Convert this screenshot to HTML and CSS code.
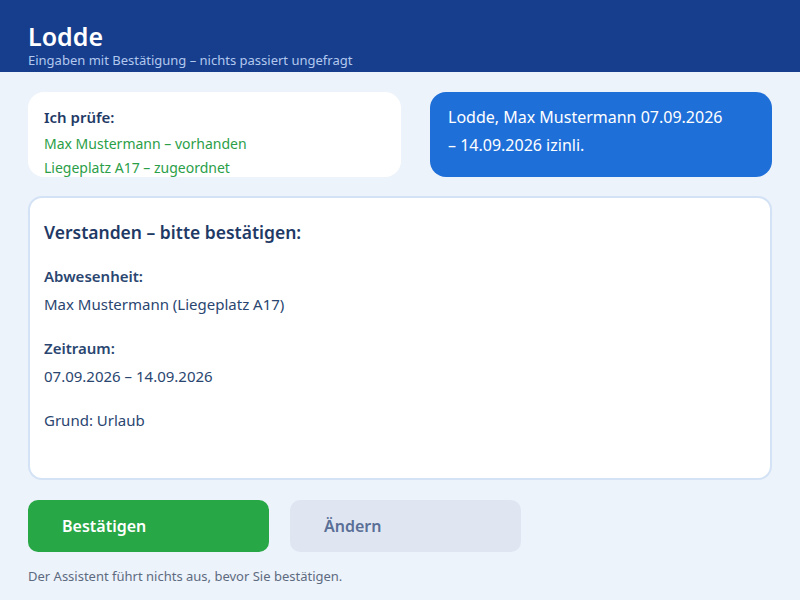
FILE: index.html
```html
<!DOCTYPE html>
<html lang="de">
<head>
    <meta http-equiv="Content-Type" content="text/html; charset=utf-8" />
    <title>Lodde</title>
    <link rel="stylesheet" href="styles.css">
</head>
<body>
  <div class="header">
    <div class="title">Lodde</div>
    <div class="subtitle">Eingaben mit Bestätigung – nichts passiert ungefragt</div>
  </div>

  <div class="main">
    <div class="top-row">
      <div class="check-card">
        <div class="check-title">Ich prüfe:</div>
        <div class="check-item">Max Mustermann – vorhanden</div>
        <div class="check-item">Liegeplatz A17 – zugeordnet</div>
      </div>
      <div class="bubble">Lodde, Max Mustermann 07.09.2026 – 14.09.2026 izinli.</div>
    </div>

    <div class="confirm-card">
      <div class="confirm-title">Verstanden – bitte bestätigen:</div>
      <div class="field">
        <div class="label">Abwesenheit:</div>
        <div class="value">Max Mustermann (Liegeplatz A17)</div>
      </div>
      <div class="field">
        <div class="label">Zeitraum:</div>
        <div class="value">07.09.2026 – 14.09.2026</div>
      </div>
      <div class="field">
        <div class="value">Grund: Urlaub</div>
      </div>
    </div>

    <div class="buttons">
      <button class="btn btn-ok">Bestätigen</button>
      <button class="btn btn-edit">Ändern</button>
    </div>

    <div class="note">Der Assistent führt nichts aus, bevor Sie bestätigen.</div>
  </div>
</body>
</html>
```

FILE: styles.css
```css
body {
    margin: 0;
    background-color: #edf3fb;
    font-family: "Noto Sans", "Open Sans", sans-serif;
    color: #1f3a66;
}

.header {
    background-color: #163e8d;
    padding: 21px 28px 0;
    height: 51px;
}

.title {
    font-size: 25px;
    font-weight: 600;
    color: #ffffff;
    line-height: 30px;
}

.subtitle {
    font-size: 13px;
    color: #b3c8ee;
    line-height: 18px;
}

.main {
    padding: 20px 28px 0;
}

.top-row {
    display: grid;
    grid-template-columns: 373px 1fr;
    gap: 29px;
}

.check-card {
    background-color: #ffffff;
    border-radius: 16px;
    height: 85px;
    overflow: hidden;
    padding: 14px 16px 0;
    box-sizing: border-box;
}

.check-title {
    font-size: 15px;
    font-weight: 600;
    line-height: 22px;
    margin-bottom: 4px;
}

.check-item {
    font-size: 14px;
    color: #2b9e48;
    line-height: 24px;
}

.bubble {
    background-color: #1f6fd9;
    color: #ffffff;
    border-radius: 16px;
    height: 85px;
    box-sizing: border-box;
    padding: 11px 40px 0 18px;
    font-size: 16px;
    line-height: 28px;
}

.confirm-card {
    margin-top: 19px;
    background-color: #ffffff;
    border: 2px solid #d3e2f5;
    border-radius: 14px;
    height: 284px;
    box-sizing: border-box;
    padding: 20px 14px 0;
}

.confirm-title {
    font-size: 17.5px;
    font-weight: 600;
    line-height: 28px;
    margin-bottom: 16px;
}

.field {
    margin-bottom: 16px;
}

.label {
    font-size: 15px;
    font-weight: 600;
    line-height: 28px;
    color: #2a4670;
}

.value {
    font-size: 15px;
    line-height: 28px;
    color: #2a4670;
}

.buttons {
    display: flex;
    gap: 21px;
    margin-top: 20px;
}

.btn {
    height: 52px;
    border: none;
    border-radius: 10px;
    font-family: inherit;
    font-size: 16px;
    font-weight: 600;
    text-align: left;
    padding: 0 34px;
    cursor: pointer;
}

.btn-ok {
    width: 241px;
    background-color: #28a746;
    color: #ffffff;
}

.btn-edit {
    width: 231px;
    background-color: #dfe6f2;
    color: #5a6f96;
}

.note {
    margin-top: 15px;
    font-size: 13px;
    color: #5d6b80;
}
```
